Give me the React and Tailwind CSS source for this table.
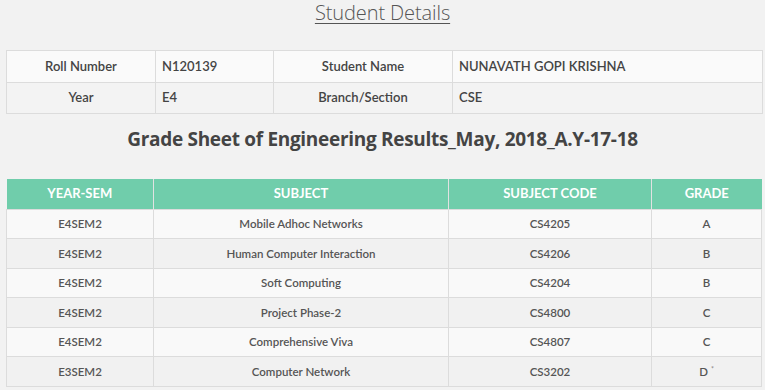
import React from 'react'

const details = [
  ['Roll Number', 'N120139', 'Student Name', 'NUNAVATH GOPI KRISHNA'],
  ['Year', 'E4', 'Branch/Section', 'CSE'],
]

const grades = [
  ['E4SEM2', 'Mobile Adhoc Networks', 'CS4205', 'A'],
  ['E4SEM2', 'Human Computer Interaction', 'CS4206', 'B'],
  ['E4SEM2', 'Soft Computing', 'CS4204', 'B'],
  ['E4SEM2', 'Project Phase-2', 'CS4800', 'C'],
  ['E4SEM2', 'Comprehensive Viva', 'CS4807', 'C'],
  ['E3SEM2', 'Computer Network', 'CS3202', 'D *'],
]

const App = () => {
  return (
    <div className="w-[765px] h-[390px] overflow-hidden bg-[#f2f2f2] font-['Lato','Open_Sans',sans-serif] text-[#444]">
      {/* Heading */}
      <div className="pt-[2px] text-center">
        <h1 className="inline-block text-[20px] leading-[20px] font-light text-[#555] underline underline-offset-[3px] decoration-1 font-['Open_Sans',sans-serif] tracking-[-0.1px]">
          Student Details
        </h1>
      </div>

      {/* Student info table */}
      <div className="pl-[6px] pr-[3px] mt-[24px]">
        <table className="w-[757px] border-collapse table-fixed text-[13px]">
          <colgroup>
            <col className="w-[149px]" />
            <col className="w-[118px]" />
            <col className="w-[179px]" />
            <col />
          </colgroup>
          <tbody>
            {details.map((row, i) => (
              <tr key={i} className={i === 0 ? 'bg-[#fafafa] h-[32px]' : 'bg-[#f3f3f3] h-[31px]'}>
                <td className="border border-[#dcdcdc] text-center font-semibold">{row[0]}</td>
                <td className="border border-[#dcdcdc] pl-[6px] font-semibold">{row[1]}</td>
                <td className="border border-[#dcdcdc] text-center font-semibold">{row[2]}</td>
                <td className="border border-[#dcdcdc] pl-[6px] font-semibold">{row[3]}</td>
              </tr>
            ))}
          </tbody>
        </table>
      </div>

      <h2 className="mt-[12px] text-center text-[19px] leading-[26px] font-bold text-[#444] font-['Open_Sans',sans-serif] tracking-[-0.3px]">
        Grade Sheet of Engineering Results_May, 2018_A.Y-17-18
      </h2>

      {/* Grade table */}
      <div className="pl-[6px] mt-[27px]">
        <table className="w-[756px] border-collapse table-fixed">
          <colgroup>
            <col className="w-[147px]" />
            <col className="w-[295px]" />
            <col className="w-[203px]" />
            <col />
          </colgroup>
          <thead>
            <tr className="bg-[#70cdab] h-[30px] text-white text-[13px] font-bold">
              <th className="border-r border-[#e2e2e2]">YEAR-SEM</th>
              <th className="border-r border-[#e2e2e2]">SUBJECT</th>
              <th className="border-r border-[#e2e2e2]">SUBJECT CODE</th>
              <th>GRADE</th>
            </tr>
          </thead>
          <tbody className="text-[11.5px] font-semibold text-[#555]">
            {grades.map((g, i) => (
              <tr key={i} className={`h-[29.5px] ${i % 2 === 0 ? 'bg-[#f9f9f9]' : 'bg-[#f1f1f1]'}`}>
                <td className="border border-[#dcdcdc] text-center">{g[0]}</td>
                <td className="border border-[#dcdcdc] text-center">{g[1]}</td>
                <td className="border border-[#dcdcdc] text-center">{g[2]}</td>
                <td className="border border-[#dcdcdc] text-center">
                  {g[3] === 'D *' ? (
                    <span>D<sup className="text-[7px] ml-[3px] text-[#888]">*</sup></span>
                  ) : g[3]}
                </td>
              </tr>
            ))}
          </tbody>
        </table>
      </div>
    </div>
  )
}

export default App
